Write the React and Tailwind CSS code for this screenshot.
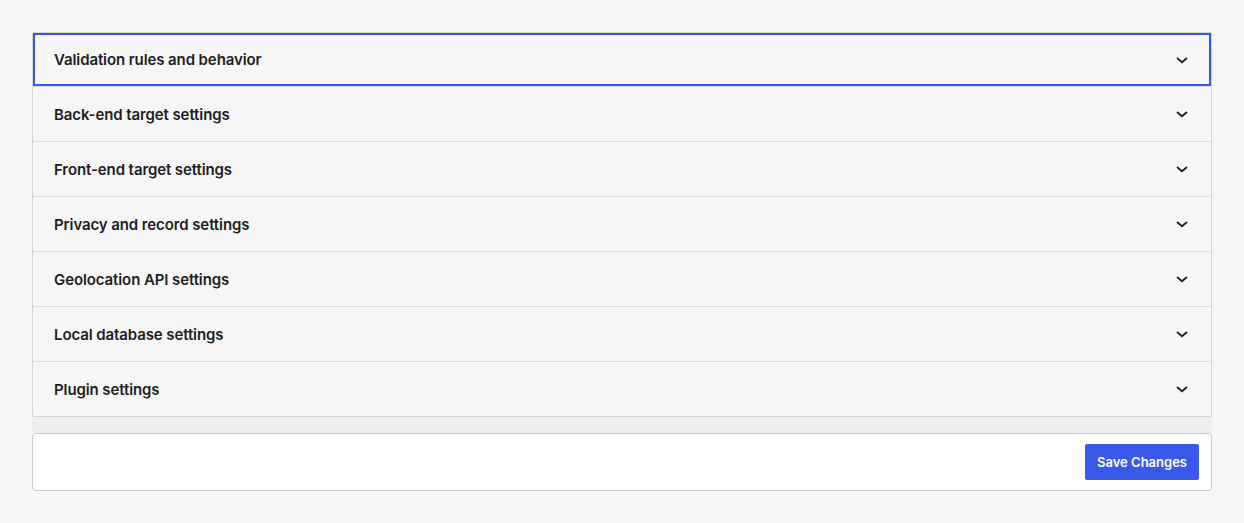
import React from "react";

const items = [
  "Validation rules and behavior",
  "Back-end target settings",
  "Front-end target settings",
  "Privacy and record settings",
  "Geolocation API settings",
  "Local database settings",
  "Plugin settings",
];

function Chevron() {
  return (
    <svg width="12" height="8" viewBox="0 0 12 8" className="text-[#1e1e1e]">
      <polyline points="1,2 6,6.2 11,2" fill="none" stroke="currentColor" strokeWidth="1.8" />
    </svg>
  );
}

export default function App() {
  return (
    <div
      className="min-h-[523px] bg-[#f5f6f5] px-[32px] pt-[32px]"
      style={{ fontFamily: "Inter, 'Noto Sans', sans-serif" }}
    >
      <div className="border border-[#d4d4d6] rounded-[2px] bg-[#f5f6f5]">
        {items.map((t, i) => (
          <div
            key={t}
            className={
              i === 0
                ? "h-[53px] shadow-[inset_0_0_0_2px_#3858e9] flex items-center justify-between pl-[21px] pr-[23px]"
                : "h-[55px] border-t border-[#dcdcde] flex items-center justify-between pl-[21px] pr-[23px]"
            }
          >
            <span className="pt-[2px] text-[15px] font-semibold text-[#1e1e1e] tracking-[-0.1px]">{t}</span>
            <Chevron />
          </div>
        ))}
      </div>
      <div className="h-[16px] bg-[#efefef]" />
      <div className="h-[58px] bg-white border border-[#c9c9cb] rounded-[4px] flex items-center justify-end pr-[12px]">
        <button className="h-[36px] px-[12px] pt-[2px] bg-[#3858e9] text-white text-[13px] font-semibold rounded-[2px]">
          Save Changes
        </button>
      </div>
    </div>
  );
}
